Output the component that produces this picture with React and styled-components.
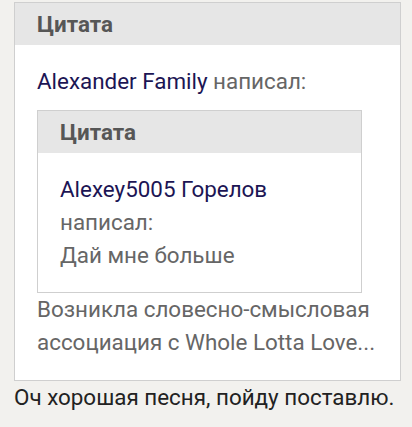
import React from "react";
import styled, { createGlobalStyle } from "styled-components";

const GlobalStyle = createGlobalStyle`
  body {
    margin: 0;
    background: #f2f1ee;
    font-family: Roboto, "Noto Sans", sans-serif;
  }
`;

const Post = styled.div`
  padding: 2px 11px 0 14px;
`;

const Quote = styled.div`
  border: 1px solid #cfcfcf;
  background: #fff;
  margin: ${(props) => props.margin || "0"};
`;

const QuoteTitle = styled.div`
  background: #e6e6e6;
  color: #565656;
  font-weight: bold;
  font-size: 22.4px;
  height: 42px;
  line-height: 42px;
  padding: 0 22px;
`;

const QuoteBody = styled.div`
  padding: ${(props) => props.padding || "20px 22px"};
  font-size: 22.4px;
  line-height: 33px;
  color: #666;
`;

const Author = styled.a`
  color: #1c1554;
  text-decoration: none;
`;

const Reply = styled.div`
  color: #222;
  font-size: 22.4px;
  line-height: 33px;
`;

export default function App() {
  return (
    <>
      <GlobalStyle />
      <Post>
        <Quote>
          <QuoteTitle>Цитата</QuoteTitle>
          <QuoteBody padding="20px 22px 21px">
            <div>
              <Author href="#">Alexander Family</Author> написал:
            </div>
            <Quote margin="12px 16px 0 0">
              <QuoteTitle>Цитата</QuoteTitle>
              <QuoteBody padding="20px 22px 20px">
                <Author href="#">Alexey5005 Горелов</Author> написал:
                <div>Дай мне больше</div>
              </QuoteBody>
            </Quote>
            <div>Возникла словесно-смысловая ассоциация с Whole Lotta Love...</div>
          </QuoteBody>
        </Quote>
        <Reply>Оч хорошая песня, пойду поставлю.</Reply>
      </Post>
    </>
  );
}
